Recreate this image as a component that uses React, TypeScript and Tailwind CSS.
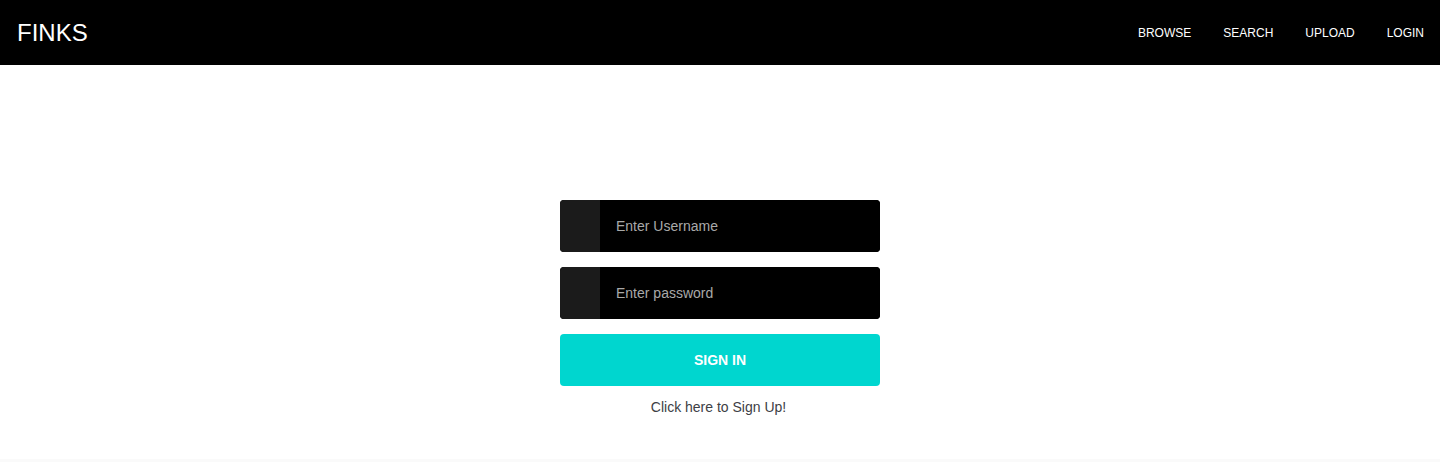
import React from 'react';

const navLinks = ['BROWSE', 'SEARCH', 'UPLOAD', 'LOGIN'];

const App = () => {
  return (
    <div className="min-h-[462px] flex flex-col bg-white font-['Liberation_Sans',Arial,sans-serif]">
      {/* Navbar */}
      <nav className="h-[65px] bg-black flex items-center justify-between pl-[17px] pr-4">
        <span className="text-white text-[24px] leading-none">FINKS</span>
        <ul className="flex items-center gap-8">
          {navLinks.map((link) => (
            <li key={link} className="text-white text-[12px] leading-none">
              {link}
            </li>
          ))}
        </ul>
      </nav>

      {/* Login form */}
      <main className="flex-1 flex justify-center pt-[135px]">
        <form className="w-[320px] flex flex-col gap-[15px]" onSubmit={(e) => e.preventDefault()}>
          <LoginInput placeholder="Enter Username" type="text" />
          <LoginInput placeholder="Enter password" type="password" />
          <button
            type="submit"
            className="h-[52px] rounded bg-[#00d6cf] text-white text-[14px] font-bold"
          >
            SIGN IN
          </button>
          <p className="text-center text-[14px] text-[#3d4045] -mt-[4px] pr-[3px]">
            Click here to Sign Up!
          </p>
        </form>
      </main>

      <div className="h-[3px] bg-[#fafafa]"></div>
    </div>
  );
};

export default App;

// --- LoginInput ---
const LoginInput = ({ placeholder, type }: { placeholder: string; type: string }) => {
  return (
    <div className="h-[52px] flex rounded overflow-hidden bg-black">
      <div className="w-10 bg-[#1b1b1b]"></div>
      <input
        type={type}
        placeholder={placeholder}
        className="flex-1 bg-black px-4 text-[14px] text-white placeholder:text-[#a9a9a9] outline-none"
      />
    </div>
  );
};
